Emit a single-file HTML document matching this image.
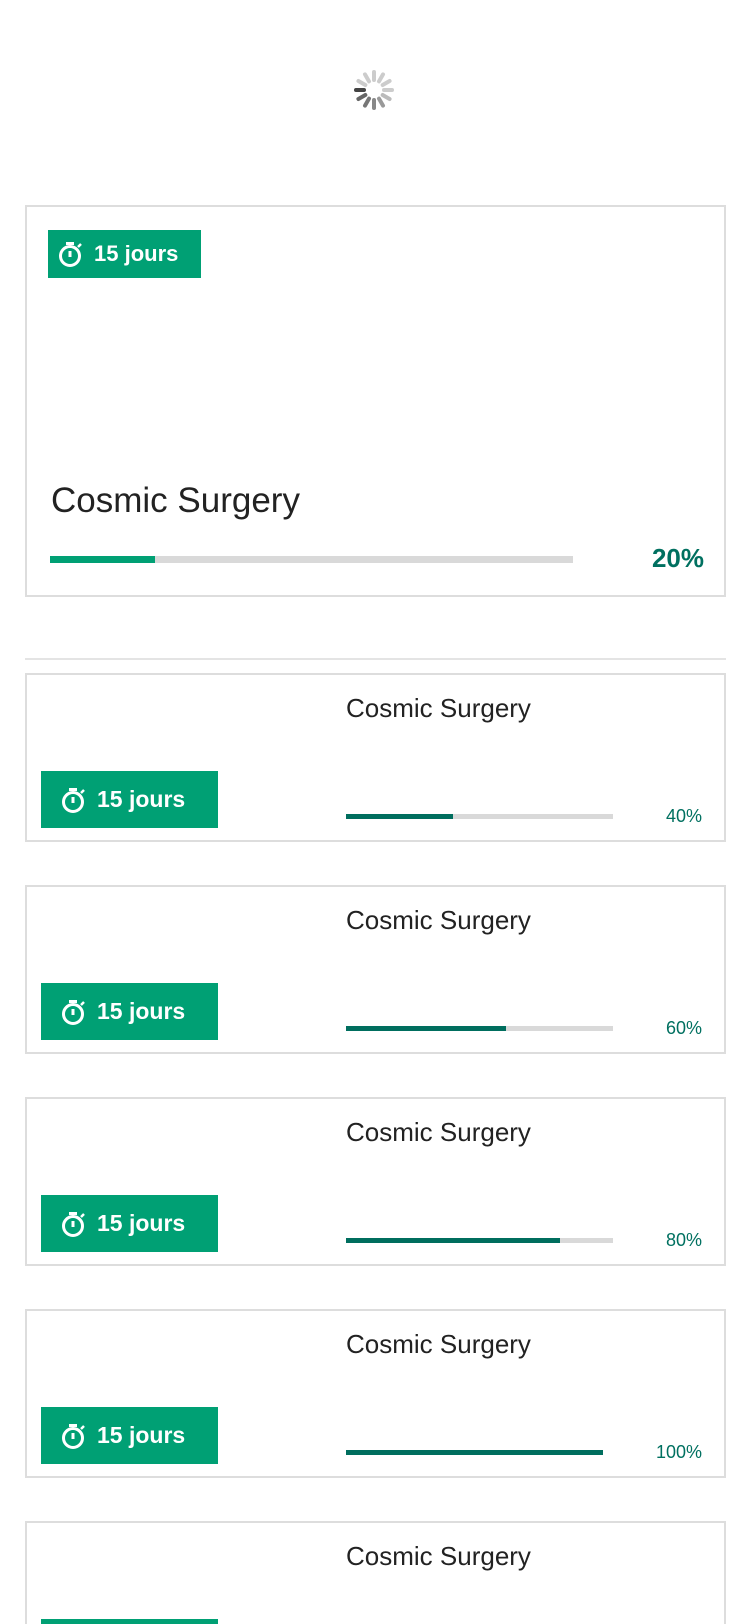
<!DOCTYPE html>
<html style="height:1624px;overflow:hidden"><head><meta charset="utf-8"><style>
body{margin:0;width:750px;height:1624px;overflow:hidden;background:#fff;font-family:"Liberation Sans",sans-serif;position:relative}
.a{position:absolute}
.card{position:absolute;left:25px;width:701px;border:2px solid #ddd;box-sizing:border-box}
.badge{position:absolute;background:#00a074;color:#fff;font-weight:bold;display:flex;align-items:center}
.bar{position:absolute;background:#d9d9d9}
.bar i{display:block;height:100%}
.t{position:absolute;left:319px;top:18px;font-size:26px;color:#222}
.p{position:absolute;right:22px;top:131px;font-size:18px;color:#007060}
</style></head><body>
<svg class="a" style="left:352px;top:68px" width="44" height="44" viewBox="-22 -22 44 44">
<g stroke-linecap="round" stroke-width="4">
<line x1="0" y1="-10" x2="0" y2="-18" stroke="#ccc" transform="rotate(0)"/>
<line x1="0" y1="-10" x2="0" y2="-18" stroke="#ccc" transform="rotate(30)"/>
<line x1="0" y1="-10" x2="0" y2="-18" stroke="#ccc" transform="rotate(60)"/>
<line x1="0" y1="-10" x2="0" y2="-18" stroke="#ccc" transform="rotate(90)"/>
<line x1="0" y1="-10" x2="0" y2="-18" stroke="#bbb" transform="rotate(120)"/>
<line x1="0" y1="-10" x2="0" y2="-18" stroke="#999" transform="rotate(150)"/>
<line x1="0" y1="-10" x2="0" y2="-18" stroke="#888" transform="rotate(180)"/>
<line x1="0" y1="-10" x2="0" y2="-18" stroke="#777" transform="rotate(210)"/>
<line x1="0" y1="-10" x2="0" y2="-18" stroke="#666" transform="rotate(240)"/>
<line x1="0" y1="-10" x2="0" y2="-18" stroke="#444" transform="rotate(270)"/>
<line x1="0" y1="-10" x2="0" y2="-18" stroke="#ccc" transform="rotate(300)"/>
<line x1="0" y1="-10" x2="0" y2="-18" stroke="#ccc" transform="rotate(330)"/>
</g></svg>

<div class="card" style="top:205px;height:392px">
<div class="badge" style="left:21px;top:23px;width:153px;height:48px;font-size:22px"><svg style="margin:0 10px 0 10px" width="26" height="28" viewBox="0 0 26 28"><circle cx="12" cy="16" r="9.5" fill="none" stroke="#fff" stroke-width="3"/><rect x="8" y="2" width="8" height="3" fill="#fff"/><line x1="12" y1="11" x2="12" y2="17" stroke="#fff" stroke-width="3"/><line x1="20" y1="7" x2="23" y2="4" stroke="#fff" stroke-width="2.5"/></svg>15 jours</div>
<div class="a" style="left:24px;top:274px;font-size:35px;color:#222">Cosmic Surgery</div>
<div class="bar" style="left:23px;top:349px;width:523px;height:7px"><i style="width:105px;background:#00a074"></i></div>
<div class="a" style="right:20px;top:336px;font-size:26px;font-weight:bold;color:#007060">20%</div>
</div>

<div class="a" style="left:25px;top:658px;width:701px;height:2px;background:#e4e4e4"></div>

<div class="card" style="top:673px;height:169px"><div class="badge" style="left:14px;top:96px;width:177px;height:57px;font-size:23px"><svg style="margin:0 10px 0 20px" width="26" height="28" viewBox="0 0 26 28"><circle cx="12" cy="16" r="9.5" fill="none" stroke="#fff" stroke-width="3"/><rect x="8" y="2" width="8" height="3" fill="#fff"/><line x1="12" y1="11" x2="12" y2="17" stroke="#fff" stroke-width="3"/><line x1="20" y1="7" x2="23" y2="4" stroke="#fff" stroke-width="2.5"/></svg>15 jours</div><div class="t">Cosmic Surgery</div><div class="bar" style="left:319px;top:139px;width:267px;height:5px"><i style="width:40%;background:#006e5e"></i></div><div class="p">40%</div></div>

<div class="card" style="top:885px;height:169px"><div class="badge" style="left:14px;top:96px;width:177px;height:57px;font-size:23px"><svg style="margin:0 10px 0 20px" width="26" height="28" viewBox="0 0 26 28"><circle cx="12" cy="16" r="9.5" fill="none" stroke="#fff" stroke-width="3"/><rect x="8" y="2" width="8" height="3" fill="#fff"/><line x1="12" y1="11" x2="12" y2="17" stroke="#fff" stroke-width="3"/><line x1="20" y1="7" x2="23" y2="4" stroke="#fff" stroke-width="2.5"/></svg>15 jours</div><div class="t">Cosmic Surgery</div><div class="bar" style="left:319px;top:139px;width:267px;height:5px"><i style="width:60%;background:#006e5e"></i></div><div class="p">60%</div></div>

<div class="card" style="top:1097px;height:169px"><div class="badge" style="left:14px;top:96px;width:177px;height:57px;font-size:23px"><svg style="margin:0 10px 0 20px" width="26" height="28" viewBox="0 0 26 28"><circle cx="12" cy="16" r="9.5" fill="none" stroke="#fff" stroke-width="3"/><rect x="8" y="2" width="8" height="3" fill="#fff"/><line x1="12" y1="11" x2="12" y2="17" stroke="#fff" stroke-width="3"/><line x1="20" y1="7" x2="23" y2="4" stroke="#fff" stroke-width="2.5"/></svg>15 jours</div><div class="t">Cosmic Surgery</div><div class="bar" style="left:319px;top:139px;width:267px;height:5px"><i style="width:80%;background:#006e5e"></i></div><div class="p">80%</div></div>

<div class="card" style="top:1309px;height:169px"><div class="badge" style="left:14px;top:96px;width:177px;height:57px;font-size:23px"><svg style="margin:0 10px 0 20px" width="26" height="28" viewBox="0 0 26 28"><circle cx="12" cy="16" r="9.5" fill="none" stroke="#fff" stroke-width="3"/><rect x="8" y="2" width="8" height="3" fill="#fff"/><line x1="12" y1="11" x2="12" y2="17" stroke="#fff" stroke-width="3"/><line x1="20" y1="7" x2="23" y2="4" stroke="#fff" stroke-width="2.5"/></svg>15 jours</div><div class="t">Cosmic Surgery</div><div class="bar" style="left:319px;top:139px;width:257px;height:5px"><i style="width:100%;background:#006e5e"></i></div><div class="p">100%</div></div>

<div class="card" style="top:1521px;height:103px;border-bottom:none"><div class="badge" style="left:14px;top:96px;width:177px;height:7px"></div><div class="t">Cosmic Surgery</div></div>
</body></html>
